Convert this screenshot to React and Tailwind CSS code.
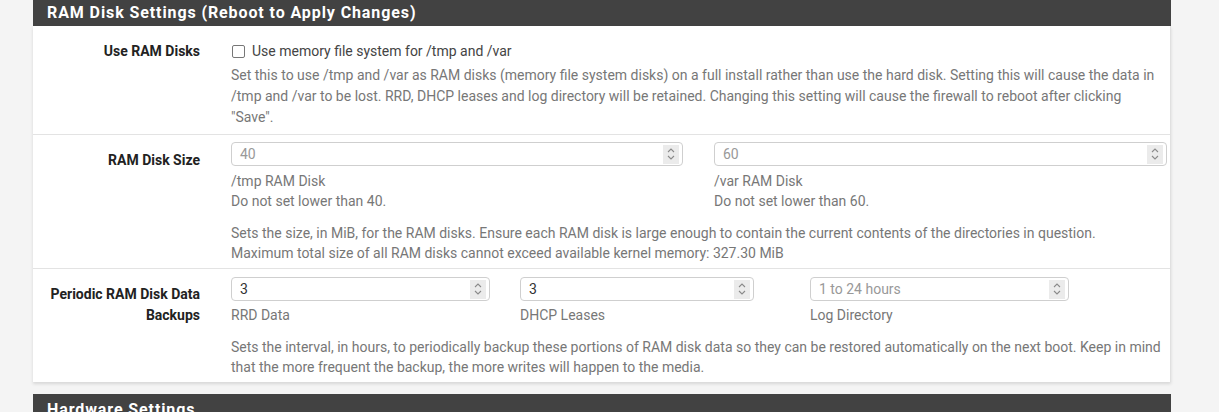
import React from "react";

function Spinner() {
  return (
    <span className="flex h-[19px] w-[16px] flex-col items-center justify-center bg-[#ebebeb]">
      <svg width="8" height="14" viewBox="0 0 8 14" fill="none" stroke="#8a8a8a" strokeWidth="1.1">
        <path d="M1 5 L4 2 L7 5" />
        <path d="M1 9 L4 12 L7 9" />
      </svg>
    </span>
  );
}

function NumberInput({ value, placeholder, className }) {
  return (
    <div
      className={`flex h-[24px] items-center justify-between rounded-[4px] border border-[#cfcfcf] bg-white pl-[8px] pr-[3px] ${className}`}
    >
      {value ? (
        <span className="text-[14px] text-[#333]">{value}</span>
      ) : (
        <span className="text-[14px] text-[#999]">{placeholder}</span>
      )}
      <Spinner />
    </div>
  );
}

function Row({ label, children, last }) {
  return (
    <div className={`flex ${last ? "" : "border-b border-[#e3e3e3]"}`}>
      <div className="w-[183px] shrink-0 pr-[16px] pt-[15px] text-right text-[14px] font-bold leading-[21px] text-[#222]">
        {label}
      </div>
      <div className="flex-1 pl-[15px] pr-[6px]">{children}</div>
    </div>
  );
}

export default function App() {
  return (
    <div
      className="h-[412px] overflow-hidden bg-[#f4f4f4] pl-[33px]"
      style={{ fontFamily: "Roboto, 'Liberation Sans', sans-serif" }}
    >
      <div className="w-[1138px]">
        <div className="h-[26px] bg-[#424242] pl-[14px] text-[16px] font-bold leading-[26px] tracking-[0.9px] text-white">
          RAM Disk Settings (Reboot to Apply Changes)
        </div>

        <div className="border-r border-[#e0e0e0] bg-white shadow-[0_2px_3px_rgba(0,0,0,0.12)]">
          <Row label="Use RAM Disks">
            <div className="pb-[6px] pt-[15px]">
              <label className="flex h-[20px] items-center gap-[7px] text-[14px] text-[#444]">
                <span className="ml-[1px] inline-block h-[13px] w-[13px] rounded-[2px] border-[1.5px] border-[#777] bg-white" />
                Use memory file system for /tmp and /var
              </label>
              <p className="mt-[4px] text-[14px] leading-[21px] text-[#777]">
                Set this to use /tmp and /var as RAM disks (memory file system disks) on a full install rather than use the hard disk. Setting this will cause the data in /tmp and /var to be lost. RRD, DHCP leases and log directory will be retained. Changing this setting will cause the firewall to reboot after clicking "Save".
              </p>
            </div>
          </Row>

          <Row label="RAM Disk Size">
            <div className="pb-[5px] pt-[7px]">
              <div className="flex gap-[31px]">
                <div className="w-[452px]">
                  <NumberInput placeholder="40" className="w-full" />
                  <div className="mt-[5px] text-[14px] leading-[20px] text-[#777]">/tmp RAM Disk</div>
                  <div className="text-[14px] leading-[20px] text-[#777]">Do not set lower than 40.</div>
                </div>
                <div className="w-[453px]">
                  <NumberInput placeholder="60" className="w-full" />
                  <div className="mt-[5px] text-[14px] leading-[20px] text-[#777]">/var RAM Disk</div>
                  <div className="text-[14px] leading-[20px] text-[#777]">Do not set lower than 60.</div>
                </div>
              </div>
              <p className="mt-[12px] text-[14px] leading-[20px] text-[#777]">
                Sets the size, in MiB, for the RAM disks. Ensure each RAM disk is large enough to contain the current contents of the directories in question.
                <br />
                Maximum total size of all RAM disks cannot exceed available kernel memory: 327.30 MiB
              </p>
            </div>
          </Row>

          <Row label={<>Periodic RAM Disk Data<br />Backups</>} last>
            <div className="pb-[5px] pt-[8px]">
              <div className="flex">
                <div className="w-[259px]">
                  <NumberInput value="3" className="w-full" />
                  <div className="mt-[4px] text-[14px] leading-[20px] text-[#777]">RRD Data</div>
                </div>
                <div className="ml-[30px] w-[234px]">
                  <NumberInput value="3" className="w-full" />
                  <div className="mt-[4px] text-[14px] leading-[20px] text-[#777]">DHCP Leases</div>
                </div>
                <div className="ml-[56px] w-[259px]">
                  <NumberInput placeholder="1 to 24 hours" className="w-full" />
                  <div className="mt-[4px] text-[14px] leading-[20px] text-[#777]">Log Directory</div>
                </div>
              </div>
              <p className="mt-[12px] text-[14px] leading-[20px] text-[#777]">
                Sets the interval, in hours, to periodically backup these portions of RAM disk data so they can be restored automatically on the next boot. Keep in mind that the more frequent the backup, the more writes will happen to the media.
              </p>
            </div>
          </Row>
        </div>

        <div className="mt-[12px] h-[36px] bg-[#424242] pl-[14px] pt-[3px] text-[16px] font-bold leading-[26px] tracking-[0.9px] text-white">
          Hardware Settings
        </div>
      </div>
    </div>
  );
}
